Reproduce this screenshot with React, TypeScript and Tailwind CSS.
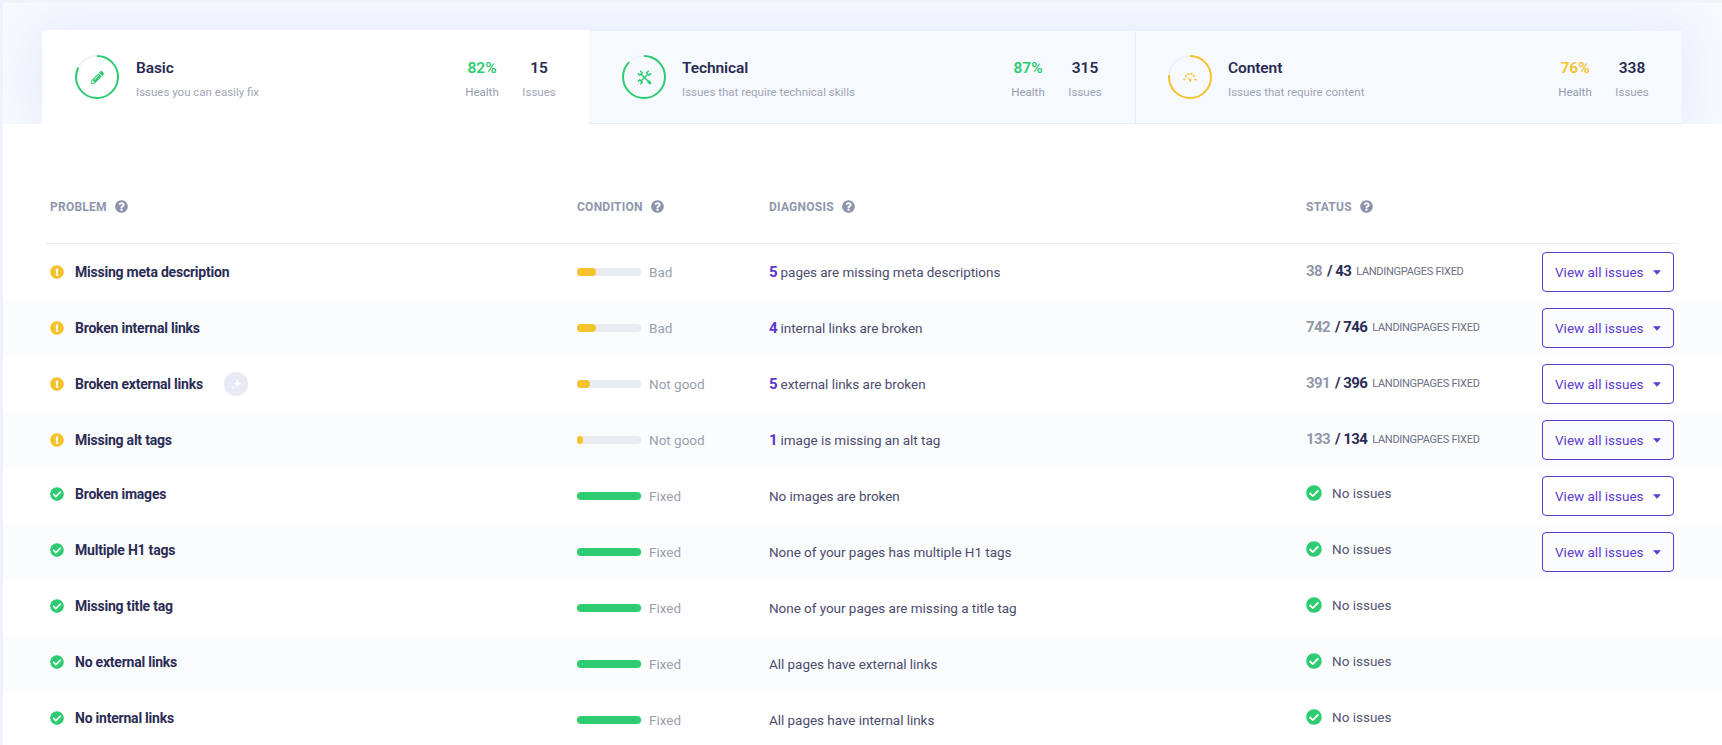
import React from "react";
import { FaPencilAlt, FaQuestionCircle, FaExclamationCircle, FaCheckCircle } from "react-icons/fa";

const C = 2 * Math.PI * 21;

function Ring({ pct, color, children }: { pct: number; color: string; children: React.ReactNode }) {
  return (
    <div className="relative flex h-[44px] w-[44px] shrink-0 items-center justify-center">
      <svg className="absolute inset-0" width="44" height="44" viewBox="0 0 44 44">
        <circle cx="22" cy="22" r="21" fill="none" stroke="#eef1f6" strokeWidth="2" />
        <circle
          cx="22"
          cy="22"
          r="21"
          fill="none"
          stroke={color}
          strokeWidth="2"
          strokeDasharray={`${(C * pct) / 100} ${C}`}
          transform="rotate(-90 22 22)"
        />
      </svg>
      {children}
    </div>
  );
}

function Gauge() {
  return (
    <svg width="14" height="12" viewBox="0 -1 14 12" fill="#f4c22b">
      <circle cx="1.5" cy="7.5" r="1.1" />
      <circle cx="3" cy="4" r="1.1" />
      <circle cx="5.4" cy="2" r="1.1" />
      <circle cx="8.6" cy="2" r="1.1" />
      <circle cx="11" cy="4" r="1.1" />
      <circle cx="12.5" cy="7.5" r="1.1" />
      <path d="M5 5.2 L8.3 7.6 A1.4 1.4 0 0 1 6.6 9.6 Z" />
    </svg>
  );
}

function Tools() {
  return (
    <svg width="15" height="15" viewBox="0 0 15 15" fill="none" stroke="#2dcc70" strokeWidth="1.5">
      <path d="M4 4 L11.5 11.5" />
      <path d="M11 11 L13.8 13.8" strokeWidth="2.6" />
      <path d="M11 4 L4 11" />
      <path d="M0.8 3.2 L2.8 5.2 L5.2 2.8 L3.2 0.8" />
      <path d="M14.2 3.2 L12.2 5.2 L9.8 2.8 L11.8 0.8" />
      <path d="M0.8 11.8 L2.8 9.8 L5.2 12.2 L3.2 14.2" />
    </svg>
  );
}

function Sparkle() {
  return (
    <svg width="12" height="12" viewBox="0 0 12 12" fill="#ffffff">
      <path d="M7.5 1 L8.6 4.4 L11.5 5.5 L8.6 6.6 L7.5 10 L6.4 6.6 L3.5 5.5 L6.4 4.4 Z" />
      <path d="M2.5 7.5 L3 9 L4.5 9.5 L3 10 L2.5 11.5 L2 10 L0.5 9.5 L2 9 Z" />
    </svg>
  );
}

function Tab(props: {
  title: string;
  sub: string;
  pct: number;
  issues: number;
  color: string;
  icon: React.ReactNode;
  active?: boolean;
  last?: boolean;
}) {
  const { title, sub, pct, issues, color, icon, active, last } = props;
  return (
    <div
      className={
        active
          ? "z-10 -mt-px flex h-[94px] w-[547px] items-center rounded-tl-[6px] bg-white pl-[33px] pr-[25px]"
          : last
            ? "flex h-[93px] w-[547px] items-center rounded-tr-[6px] border-b border-l border-[#e9edf4] bg-[#f6f9fd] pl-[32px] pr-[25px]"
            : "flex h-[93px] w-[546px] items-center border-b border-[#e9edf4] bg-[#f6f9fd] pl-[33px] pr-[25px]"
      }
    >
      <Ring pct={pct} color={color}>{icon}</Ring>
      <div className={active ? "ml-[17px] flex-1 pt-1" : "ml-[16px] flex-1 pt-1"}>
        <div className="text-[15.5px] font-semibold leading-5 tracking-[-0.1px] text-[#2a2b52]">{title}</div>
        <div className="mt-[6px] text-[11.5px] leading-4 text-[#9fa5b7]">{sub}</div>
      </div>
      <div className="flex gap-[7px] pt-1 text-center">
        <div className="w-[50px]">
          <div className="text-[15.5px] font-semibold leading-5" style={{ color }}>{pct}%</div>
          <div className="mt-[6px] text-[11.5px] leading-4 text-[#959bad]">Health</div>
        </div>
        <div className="w-[50px]">
          <div className="text-[15.5px] font-semibold leading-5 text-[#2a2b52]">{issues}</div>
          <div className="mt-[6px] text-[11.5px] leading-4 text-[#9fa5b7]">Issues</div>
        </div>
      </div>
    </div>
  );
}

function Head({ label }: { label: string }) {
  return (
    <div className="flex items-center gap-[8px]">
      <span className="text-[12px] font-bold leading-4 tracking-[0.25px] text-[#8f96ad]">{label}</span>
      <FaQuestionCircle className="mb-[1px] text-[13px] text-[#8c93ab]" />
    </div>
  );
}

type Row = {
  name: string;
  ok?: boolean;
  fill?: number;
  cond: string;
  num?: string;
  diag: string;
  a?: string;
  b?: string;
  btn?: boolean;
  spark?: boolean;
};

const rows: Row[] = [
  { name: "Missing meta description", fill: 19, cond: "Bad", num: "5", diag: "pages are missing meta descriptions", a: "38", b: "43", btn: true },
  { name: "Broken internal links", fill: 19, cond: "Bad", num: "4", diag: "internal links are broken", a: "742", b: "746", btn: true },
  { name: "Broken external links", fill: 13, cond: "Not good", num: "5", diag: "external links are broken", a: "391", b: "396", btn: true, spark: true },
  { name: "Missing alt tags", fill: 6, cond: "Not good", num: "1", diag: "image is missing an alt tag", a: "133", b: "134", btn: true },
  { name: "Broken images", ok: true, cond: "Fixed", diag: "No images are broken", btn: true },
  { name: "Multiple H1 tags", ok: true, cond: "Fixed", diag: "None of your pages has multiple H1 tags", btn: true },
  { name: "Missing title tag", ok: true, cond: "Fixed", diag: "None of your pages are missing a title tag" },
  { name: "No external links", ok: true, cond: "Fixed", diag: "All pages have external links" },
  { name: "No internal links", ok: true, cond: "Fixed", diag: "All pages have internal links" },
];

function TableRow({ r, tint }: { r: Row; tint: boolean }) {
  return (
    <div
      className={
        tint
          ? "grid h-14 grid-cols-[527px_192px_537px_236px_132px] items-center bg-[#fbfcfe] pl-[47px]"
          : "grid h-14 grid-cols-[527px_192px_537px_236px_132px] items-center pl-[47px]"
      }
    >
      <div className={r.ok ? "flex items-center pb-1" : "flex items-center"}>
        {r.ok ? (
          <FaCheckCircle className="text-[14px] text-[#2dcc70]" />
        ) : (
          <FaExclamationCircle className="text-[14px] text-[#f4c22b]" />
        )}
        <span className="ml-[11px] text-[14px] font-bold leading-5 tracking-[-0.22px] text-[#2b2c55]">{r.name}</span>
        {r.spark && (
          <span className="ml-[21px] flex h-6 w-6 items-center justify-center rounded-full bg-[#eaeaf6]">
            <Sparkle />
          </span>
        )}
      </div>
      <div className="flex items-center">
        <div className="h-2 w-16 rounded-full bg-[#e9edf2]">
          {r.ok ? (
            <div className="h-2 w-16 rounded-full bg-[#2dcc70]" />
          ) : (
            <div className="h-2 rounded-full bg-[#f4c22b]" style={{ width: r.fill }} />
          )}
        </div>
        <span className="ml-[8px] text-[13.5px] leading-5 text-[#9a9fae]">{r.cond}</span>
      </div>
      <div className="text-[13.5px] leading-5 tracking-[-0.04px] text-[#4b4c6e]">
        {r.num && <span className="mr-[3px] text-[15px] font-bold text-[#5a35d0]">{r.num}</span>}
        {r.diag}
      </div>
      <div>
        {r.a ? (
          <div className="flex items-center">
            <span className="pb-[2px] text-[15px] font-bold leading-5 tracking-[-0.6px] text-[#9097a9]">{r.a}</span>
            <span className="ml-[5px] pb-[2px] text-[15px] font-bold leading-5 tracking-[-0.6px] text-[#2b2c55]">/ {r.b}</span>
            <span className="ml-[5px] text-[11px] uppercase leading-4 tracking-[-0.28px] text-[#6b7085]">landingpages fixed</span>
          </div>
        ) : (
          <div className="flex items-center pb-[6px]">
            <FaCheckCircle className="text-[16px] text-[#2dcc70]" />
            <span className="ml-[10px] text-[13.5px] leading-5 text-[#55566f]">No issues</span>
          </div>
        )}
      </div>
      {r.btn ? (
        <button className="flex h-10 w-[132px] items-center rounded-[4px] border border-[#5b3bd1] pl-[12px] text-[13.5px] leading-5 text-[#5b3bd1]">
          View all issues
          <svg className="ml-[9px]" width="8" height="5" viewBox="0 0 8 5" fill="#5b3bd1">
            <path d="M0 0.3 H8 L4 4.7 Z" />
          </svg>
        </button>
      ) : (
        <div />
      )}
    </div>
  );
}

export default function App() {
  return (
    <div className="h-[745px] w-[1722px] overflow-hidden bg-[#edf2fe] pl-[3px] [font-family:Roboto,sans-serif]">
      <div className="h-[745px] bg-white">
        <div className="overflow-hidden border-t-[3px] border-[#f1f3f8] bg-[#f8fafe] pl-[39px] pt-[28px]">
          <div className="flex w-[1640px] shadow-[0_0_50px_12px_#e6edfc]">
            <Tab
              active
              title="Basic"
              sub="Issues you can easily fix"
              pct={82}
              issues={15}
              color="#2dcc70"
              icon={<FaPencilAlt className="text-[13px] text-[#2dcc70]" />}
            />
            <Tab
              title="Technical"
              sub="Issues that require technical skills"
              pct={87}
              issues={315}
              color="#2dcc70"
              icon={<Tools />}
            />
            <Tab
              last
              title="Content"
              sub="Issues that require content"
              pct={76}
              issues={338}
              color="#f4c22b"
              icon={<Gauge />}
            />
          </div>
        </div>
        <div className="relative bg-white">
          <div className="ml-[43px] grid h-[120px] w-[1632px] grid-cols-[527px_192px_537px_1fr] items-start border-b border-[#e9ebf0] pl-[4px] pt-[75px]">
            <Head label="PROBLEM" />
            <Head label="CONDITION" />
            <Head label="DIAGNOSIS" />
            <Head label="STATUS" />
          </div>
          {rows.map((r, i) => (
            <TableRow key={r.name} r={r} tint={i % 2 === 1} />
          ))}
        </div>
      </div>
    </div>
  );
}
